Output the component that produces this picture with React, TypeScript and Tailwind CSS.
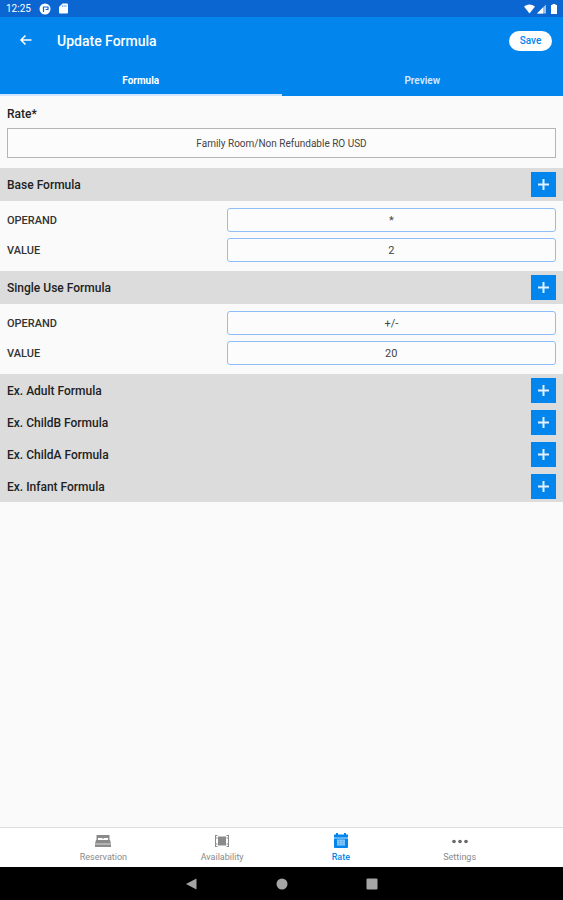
import { useState } from 'react';
import type { ReactNode } from 'react';

interface FormulaFields {
  operand: string;
  value: string;
}

interface FormulaSection {
  id: string;
  title: string;
  fields?: FormulaFields;
}

const SECTIONS: FormulaSection[] = [
  { id: 'base', title: 'Base Formula', fields: { operand: '*', value: '2' } },
  { id: 'single', title: 'Single Use Formula', fields: { operand: '+/-', value: '20' } },
  { id: 'adult', title: 'Ex. Adult Formula' },
  { id: 'child-b', title: 'Ex. ChildB Formula' },
  { id: 'child-a', title: 'Ex. ChildA Formula' },
  { id: 'infant', title: 'Ex. Infant Formula' },
];

const TABS = ['Formula', 'Preview'];

function BedIcon() {
  return (
    <svg width="18" height="16" viewBox="0 0 18 16" fill="currentColor" aria-hidden="true">
      <path d="M2.500 2h13v5H14V5H9.500v1h-1V5H4v2H2.500z" />
      <path d="M2 7h14l1 3.500H1z" />
      <path d="M1 10.500h16V12H1z" opacity=".65" />
      <path d="M1 12h16v2H1z" />
    </svg>
  );
}

function RoomIcon() {
  return (
    <svg width="16" height="16" viewBox="0 0 16 16" fill="currentColor" aria-hidden="true">
      <path d="M4 3.500h8v9H4z" />
      <path
        d="M1.500 2v12M14.500 2v12M1.500 2.500h2M12.500 2.500h2M1.500 13.500h2M12.500 13.500h2M3.500 5h-2M3.500 11h-2M12.500 5h2M12.500 11h2"
        fill="none"
        stroke="currentColor"
      />
    </svg>
  );
}

function CalendarIcon() {
  return (
    <svg width="16" height="16" viewBox="0 0 16 16" fill="currentColor" aria-hidden="true">
      <path d="M3 0h2v1.500h6V0h2v1.500h2V4.500H1v-3h2z" />
      <path d="M1.500 4.500h13v1h-13z" opacity=".5" />
      <path d="M1 5.500h14V14a1 1 0 0 1-1 1H2a1 1 0 0 1-1-1z" />
      <path d="M4 6.500h8v6H4z" fill="#8cc8f9" />
      <path d="M4 8.500h8M4 10.500h8M6.500 6.500v6M9.500 6.500v6" stroke="#4fabf4" strokeWidth=".5" />
    </svg>
  );
}

function DotsIcon() {
  return (
    <svg width="16" height="16" viewBox="0 0 16 16" fill="#666" aria-hidden="true">
      <circle cx="2" cy="8.500" r="1.800" />
      <circle cx="8" cy="8.500" r="1.800" />
      <circle cx="14" cy="8.500" r="1.800" />
    </svg>
  );
}

const NAV_ITEMS: { label: string; icon: ReactNode }[] = [
  { label: 'Reservation', icon: <BedIcon /> },
  { label: 'Availability', icon: <RoomIcon /> },
  { label: 'Rate', icon: <CalendarIcon /> },
  { label: 'Settings', icon: <DotsIcon /> },
];

function StatusBar() {
  return (
    <div className="flex h-[17px] items-center justify-between bg-[#0b66d2] pr-1 pl-1.5 text-white">
      <div className="flex items-center gap-2">
        <span className="text-[10px] leading-4">12:25</span>
        <svg width="12" height="12" viewBox="0 0 12 12" aria-hidden="true">
          <circle cx="6" cy="6" r="5.500" fill="#fff" />
          <path d="M4.500 9V4h4.500v2.500H6.500" fill="none" stroke="#0b66d2" strokeWidth="1.200" />
        </svg>
        <svg width="9" height="11" viewBox="0 0 9 11" fill="currentColor" aria-hidden="true">
          <path d="M3.500 .5H8a1 1 0 0 1 1 1v8a1 1 0 0 1-1 1H1a1 1 0 0 1-1-1V4z" />
          <path d="M3.500 2v2M5.200 2v2M7 2v2" stroke="#0b66d2" strokeWidth=".5" />
        </svg>
      </div>
      <div className="flex items-center gap-0.5">
        <svg width="11" height="10" viewBox="0 0 11 10" fill="currentColor" aria-hidden="true">
          <path d="M0 2.500Q5.500-1.500 11 2.500L5.500 9.500z" />
        </svg>
        <svg width="10" height="10" viewBox="0 0 10 10" fill="currentColor" aria-hidden="true">
          <path d="M9 .5V9.500H0z" opacity=".6" />
          <path d="M6 3.500V9.500H0z" />
        </svg>
        <svg width="10" height="10" viewBox="0 0 10 10" fill="currentColor" aria-hidden="true">
          <path d="M3.500 0h3v1H8v9H2V1h1.500z" />
        </svg>
      </div>
    </div>
  );
}

function FieldRow({ id, label, value }: { id: string; label: string; value: string }) {
  return (
    <div className="flex items-center justify-between">
      <label htmlFor={id} className="pt-px text-[11px] leading-4 font-medium text-[#333]">
        {label}
      </label>
      <input
        id={id}
        type="text"
        defaultValue={value}
        className="h-6 w-3/5 rounded-[3px] border border-[#8fbdf5] bg-[#fcfcfc] text-center text-[11px] text-[#444] outline-none focus:border-[#0286ed]"
      />
    </div>
  );
}

function Section({ section }: { section: FormulaSection }) {
  const { id, title, fields } = section;

  return (
    <section>
      <div className={`flex items-center justify-between bg-[#dcdcdc] px-[7px] ${fields ? 'h-[33px]' : 'h-8'}`}>
        <h2 className="pt-px text-[12px] leading-4 font-medium text-[#222]">{title}</h2>
        <button
          type="button"
          aria-label={`Add ${title}`}
          className="flex size-[25px] items-center justify-center bg-[#0286ed] text-[#e3f1fd]"
        >
          <svg width="11" height="11" viewBox="0 0 11 11" aria-hidden="true">
            <path d="M5.500 0v11M0 5.500h11" fill="none" stroke="currentColor" strokeWidth="2" />
          </svg>
        </button>
      </div>
      {fields && (
        <div className="flex flex-col gap-1.5 px-[7px] pt-[7px] pb-[9px]">
          <FieldRow id={`${id}-operand`} label="OPERAND" value={fields.operand} />
          <FieldRow id={`${id}-value`} label="VALUE" value={fields.value} />
        </div>
      )}
    </section>
  );
}

export default function App() {
  const [activeTab, setActiveTab] = useState('Formula');

  return (
    <div className="flex min-h-screen flex-col bg-[#fafafa] font-['Roboto',sans-serif]">
      <StatusBar />

      <header className="bg-[#0286ed] text-white">
        <div className="flex h-[47px] items-center pr-[11px] pl-[19px]">
          <button type="button" aria-label="Back" className="mr-6">
            <svg width="14" height="14" viewBox="0 0 14 14" aria-hidden="true">
              <path d="M12.500 6H2M6.500 1.500L2 6l4.500 4.500" fill="none" stroke="currentColor" strokeWidth="1.500" />
            </svg>
          </button>
          <h1 className="flex-1 text-[14px] leading-5 font-medium">Update Formula</h1>
          <button type="button" className="h-5 w-[43px] rounded-full bg-white text-[10px] font-medium text-[#0286ed]">
            Save
          </button>
        </div>
        <div role="tablist" className="flex h-8">
          {TABS.map((tab) => (
            <button
              key={tab}
              type="button"
              role="tab"
              aria-selected={tab === activeTab}
              onClick={() => setActiveTab(tab)}
              className={`flex-1 border-b-2 pt-0.5 text-[10px] ${
                tab === activeTab ? 'border-[#d3e5fc] font-bold text-white' : 'border-[#0286ed] font-semibold text-[#d5e9fd]'
              }`}
            >
              {tab}
            </button>
          ))}
        </div>
      </header>

      <main className="flex-1">
        <div className="flex flex-col gap-1.5 px-[7px] pt-[10px] pb-[10px]">
          <label htmlFor="rate" className="text-[12px] leading-4 font-medium text-[#222]">
            Rate*
          </label>
          <input
            id="rate"
            type="text"
            defaultValue="Family Room/Non Refundable RO USD"
            className="h-[30px] w-full border border-[#b5b5b5] bg-[#fcfcfc] text-center text-[10px] text-[#444] outline-none"
          />
        </div>
        {SECTIONS.map((section) => (
          <Section key={section.id} section={section} />
        ))}
      </main>

      <nav className="flex h-10 border-t border-[#dedede] bg-white px-11">
        {NAV_ITEMS.map(({ label, icon }) => (
          <a
            key={label}
            href="#"
            className={`flex flex-1 flex-col items-center gap-0.5 pt-[5px] text-[9px] leading-3 ${
              label === 'Rate' ? 'font-medium text-[#0286ed]' : 'text-[#8a8a8a]'
            }`}
          >
            {icon}
            {label}
          </a>
        ))}
      </nav>

      {/* Android system buttons */}
      <div className="flex h-[33px] items-center justify-center gap-[78px] bg-black text-[#a5a5a5]">
        <button type="button" aria-label="System back">
          <svg width="12" height="12" viewBox="0 0 12 12" fill="currentColor" aria-hidden="true">
            <path d="M10.500 .5v11L0 6z" />
          </svg>
        </button>
        <button type="button" aria-label="Home">
          <svg width="12" height="12" viewBox="0 0 12 12" fill="currentColor" aria-hidden="true">
            <circle cx="6" cy="6" r="5.500" />
          </svg>
        </button>
        <button type="button" aria-label="Recent apps">
          <svg width="12" height="12" viewBox="0 0 12 12" fill="currentColor" aria-hidden="true">
            <rect x=".5" y=".5" width="11" height="11" rx="1" />
          </svg>
        </button>
      </div>
    </div>
  );
}
